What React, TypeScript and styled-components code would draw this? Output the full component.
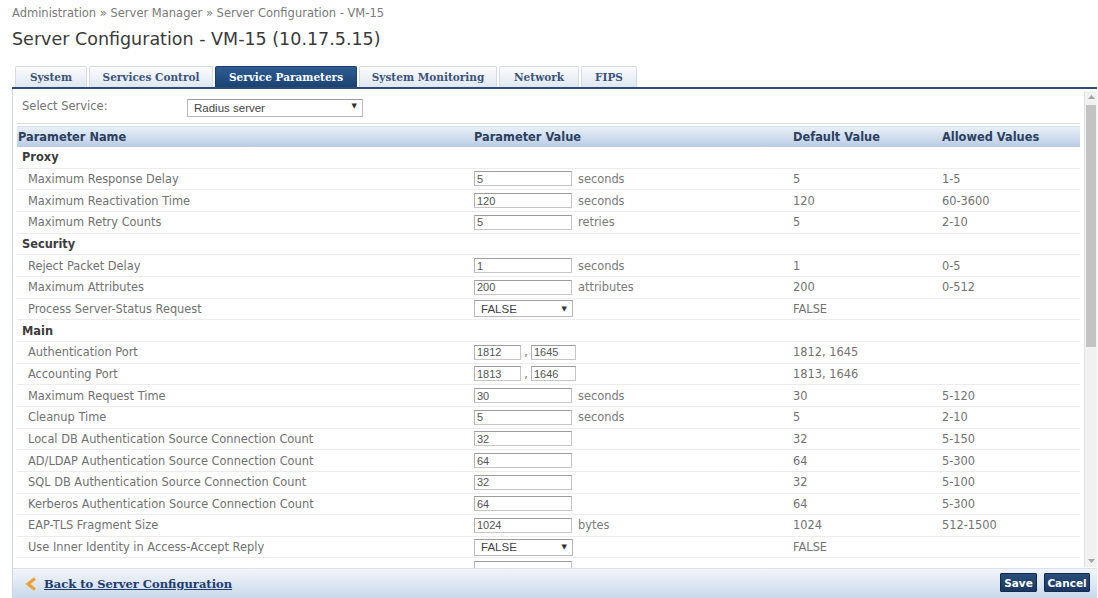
import React from "react";
import styled, { createGlobalStyle } from "styled-components";

const GlobalStyle = createGlobalStyle`
  html, body { margin: 0; padding: 0; background: #ffffff; }
  body { font-family: "DejaVu Sans", Verdana, sans-serif; color: #333; overflow: hidden; }
  * { box-sizing: border-box; }
`;

const Page = styled.div`
  width: 1098px;
  height: 598px;
  padding: 0 1px 0 12px;
  display: flex;
  flex-direction: column;
`;

const Breadcrumb = styled.div`
  margin-top: 6px;
  font-size: 11.5px;
  line-height: 15px;
  color: #7a7a7a;
`;

const Title = styled.h1`
  margin: 7px 0 0 0;
  font-size: 17.5px;
  line-height: 22px;
  font-weight: normal;
  color: #3a3a3a;
`;

const TabBar = styled.div`
  margin-top: 16px;
  display: flex;
  gap: 2px;
  padding-left: 3px;
  border-bottom: 2px solid #2c4c74;
`;

const Tab = styled.div<{ $active?: boolean; $w: number }>`
  width: ${(p) => p.$w}px;
  height: 21px;
  display: flex;
  align-items: center;
  justify-content: center;
  font-family: "DejaVu Serif", Georgia, serif;
  font-weight: bold;
  font-size: 10.5px;
  border: 1px solid ${(p) => (p.$active ? "#1b3f6b" : "#d3dbe6")};
  border-bottom: none;
  border-radius: 2px 2px 0 0;
  color: ${(p) => (p.$active ? "#ffffff" : "#3b5579")};
  background: ${(p) =>
    p.$active
      ? "linear-gradient(#2d5c92, #1b4273)"
      : "linear-gradient(#fbfcfe, #dfe7f1)"};
`;

const Panel = styled.div`
  flex: 1;
  display: flex;
  flex-direction: column;
  border-left: 1px solid #cdd5df;
  min-height: 0;
`;

const Body = styled.div`
  height: 479px;
  display: flex;
`;

const TableArea = styled.div`
  flex: 1;
  overflow: hidden;
  padding: 0 4px 0 4px;
`;

const SelectRow = styled.div`
  height: 35px;
  display: grid;
  grid-template-columns: 170px 176px;
  align-items: center;
  border-bottom: 1px solid #dcdcdc;
`;

const SelectLabel = styled.span`
  padding-left: 5px;
  font-size: 11.5px;
  color: #737373;
`;

const SelectWrap = styled.div<{ $w: number; $h: number }>`
  position: relative;
  width: ${(p) => p.$w}px;
  height: ${(p) => p.$h}px;
`;

const NativeSelect = styled.select`
  appearance: none;
  -webkit-appearance: none;
  width: 100%;
  height: 100%;
  margin: 0;
  padding: 0 0 0 6px;
  border: 1px solid #b9b9b9;
  border-top-color: #9c9c9c;
  border-radius: 0;
  background: #ffffff;
  font-family: "Liberation Sans", Arial, sans-serif;
  font-size: 11.5px;
  color: #444;
`;

const Caret = styled.span`
  position: absolute;
  right: 6px;
  top: 50%;
  transform: translateY(-50%);
  font-size: 7px;
  color: #333;
  pointer-events: none;
`;

const HeaderRow = styled.div`
  margin-top: 2px;
  height: 21px;
  display: grid;
  grid-template-columns: 457px 319px 149px 1fr;
  align-items: center;
  background: linear-gradient(#e8eff8, #b9cce5);
  border-top: 1px solid #d4dde9;
  font-weight: bold;
  font-size: 11.4px;
  color: #2c3f5e;
`;

const HeadCell = styled.span<{ $pad?: number }>`
  padding-left: ${(p) => p.$pad ?? 0}px;
`;

const Row = styled.div`
  height: 21.67px;
  display: grid;
  grid-template-columns: 457px 319px 149px 1fr;
  align-items: center;
  border-bottom: 1px solid #ececec;
  font-size: 11.4px;
  color: #717171;
`;

const SectionRow = styled.div`
  height: 21.67px;
  display: flex;
  align-items: center;
  padding-left: 5px;
  border-bottom: 1px solid #ececec;
  font-size: 11.4px;
  font-weight: bold;
  color: #3c3c3c;
`;

const NameCell = styled.span`
  padding-left: 11px;
  white-space: nowrap;
`;

const ValueCell = styled.div`
  display: flex;
  align-items: center;
`;

const TextInput = styled.input<{ $w: number }>`
  width: ${(p) => p.$w}px;
  height: 15px;
  margin: 0;
  padding: 0 2px;
  border: 1px solid #c6c6c6;
  border-top-color: #9d9d9d;
  border-left-color: #b3b3b3;
  border-radius: 0;
  font-family: "Liberation Sans", Arial, sans-serif;
  font-size: 11px;
  color: #555;
  background: #fff;
`;

const Unit = styled.span`
  margin-left: 6px;
  color: #7a7a7a;
`;

const Comma = styled.span`
  width: 10px;
  text-align: center;
  color: #777;
`;

const Plain = styled.span`
  color: #727272;
`;

const ScrollBar = styled.div`
  width: 13px;
  margin-top: 2px;
  margin-bottom: 1px;
  display: flex;
  flex-direction: column;
  background: #f1f1f1;
  border-left: 1px solid #e2e2e2;
`;

const ScrollArrow = styled.div`
  height: 12px;
  display: flex;
  align-items: center;
  justify-content: center;
`;

const Track = styled.div`
  flex: 1;
  padding: 2px 1px;
`;

const Thumb = styled.div`
  height: 242px;
  background: #c3c3c3;
`;

const Footer = styled.div`
  height: 30px;
  display: flex;
  align-items: center;
  justify-content: space-between;
  padding: 0 7px 0 12px;
  background: linear-gradient(#f2f5fa, #c9d9ec);
  border-top: 1px solid #d8e1ec;
`;

const BackLink = styled.a`
  display: flex;
  align-items: center;
  gap: 7px;
  font-family: "DejaVu Serif", Georgia, serif;
  font-weight: bold;
  font-size: 11.5px;
  color: #1f3c6e;
  text-decoration: none;
  cursor: pointer;
`;

const LinkText = styled.span`
  text-decoration: underline;
`;

const Buttons = styled.div`
  display: flex;
  gap: 7px;
  margin-bottom: 2px;
`;

const Button = styled.button<{ $w: number }>`
  width: ${(p) => p.$w}px;
  height: 19px;
  padding: 0;
  border: 1px solid #122c50;
  border-radius: 1px;
  background: linear-gradient(#2a4d7b, #1a375f);
  color: #ffffff;
  font-family: "DejaVu Sans", Verdana, sans-serif;
  font-weight: bold;
  font-size: 10.5px;
  cursor: pointer;
`;

type Value =
  | { kind: "input"; v: string; unit?: string }
  | { kind: "pair"; a: string; b: string }
  | { kind: "select"; v: string }
  | { kind: "blank" };

type Item =
  | { type: "section"; name: string }
  | { type: "param"; name: string; value: Value; def: string; allowed: string };

const items: Item[] = [
  { type: "section", name: "Proxy" },
  { type: "param", name: "Maximum Response Delay", value: { kind: "input", v: "5", unit: "seconds" }, def: "5", allowed: "1-5" },
  { type: "param", name: "Maximum Reactivation Time", value: { kind: "input", v: "120", unit: "seconds" }, def: "120", allowed: "60-3600" },
  { type: "param", name: "Maximum Retry Counts", value: { kind: "input", v: "5", unit: "retries" }, def: "5", allowed: "2-10" },
  { type: "section", name: "Security" },
  { type: "param", name: "Reject Packet Delay", value: { kind: "input", v: "1", unit: "seconds" }, def: "1", allowed: "0-5" },
  { type: "param", name: "Maximum Attributes", value: { kind: "input", v: "200", unit: "attributes" }, def: "200", allowed: "0-512" },
  { type: "param", name: "Process Server-Status Request", value: { kind: "select", v: "FALSE" }, def: "FALSE", allowed: "" },
  { type: "section", name: "Main" },
  { type: "param", name: "Authentication Port", value: { kind: "pair", a: "1812", b: "1645" }, def: "1812, 1645", allowed: "" },
  { type: "param", name: "Accounting Port", value: { kind: "pair", a: "1813", b: "1646" }, def: "1813, 1646", allowed: "" },
  { type: "param", name: "Maximum Request Time", value: { kind: "input", v: "30", unit: "seconds" }, def: "30", allowed: "5-120" },
  { type: "param", name: "Cleanup Time", value: { kind: "input", v: "5", unit: "seconds" }, def: "5", allowed: "2-10" },
  { type: "param", name: "Local DB Authentication Source Connection Count", value: { kind: "input", v: "32" }, def: "32", allowed: "5-150" },
  { type: "param", name: "AD/LDAP Authentication Source Connection Count", value: { kind: "input", v: "64" }, def: "64", allowed: "5-300" },
  { type: "param", name: "SQL DB Authentication Source Connection Count", value: { kind: "input", v: "32" }, def: "32", allowed: "5-100" },
  { type: "param", name: "Kerberos Authentication Source Connection Count", value: { kind: "input", v: "64" }, def: "64", allowed: "5-300" },
  { type: "param", name: "EAP-TLS Fragment Size", value: { kind: "input", v: "1024", unit: "bytes" }, def: "1024", allowed: "512-1500" },
  { type: "param", name: "Use Inner Identity in Access-Accept Reply", value: { kind: "select", v: "FALSE" }, def: "FALSE", allowed: "" },
  { type: "param", name: "", value: { kind: "input", v: "" }, def: "", allowed: "" },
];

function SelectBox({ value, w, h }: { value: string; w: number; h: number }) {
  return (
    <SelectWrap $w={w} $h={h}>
      <NativeSelect defaultValue={value}>
        <option value={value}>{value}</option>
      </NativeSelect>
      <Caret>▼</Caret>
    </SelectWrap>
  );
}

function ValueView({ value }: { value: Value }) {
  switch (value.kind) {
    case "input":
      return (
        <ValueCell>
          <TextInput $w={98} defaultValue={value.v} readOnly />
          {value.unit && <Unit>{value.unit}</Unit>}
        </ValueCell>
      );
    case "pair":
      return (
        <ValueCell>
          <TextInput $w={47} defaultValue={value.a} readOnly />
          <Comma>,</Comma>
          <TextInput $w={45} defaultValue={value.b} readOnly />
        </ValueCell>
      );
    case "select":
      return (
        <ValueCell>
          <SelectBox value={value.v} w={99} h={17} />
        </ValueCell>
      );
    default:
      return <ValueCell />;
  }
}

function ChevronLeft() {
  return (
    <svg width="12" height="14" viewBox="0 0 12 14">
      <polyline
        points="10,1.5 3,7 10,12.5"
        fill="none"
        stroke="#f0a032"
        strokeWidth="3.2"
        strokeLinejoin="miter"
      />
    </svg>
  );
}

function ArrowIcon({ up }: { up?: boolean }) {
  return (
    <svg width="7" height="4" viewBox="0 0 7 4">
      <polygon points={up ? "0,4 3.5,0 7,4" : "0,0 3.5,4 7,0"} fill="#a3a3a3" />
    </svg>
  );
}

export default function App() {
  const tabs: { label: string; w: number; active?: boolean }[] = [
    { label: "System", w: 72 },
    { label: "Services Control", w: 124 },
    { label: "Service Parameters", w: 142, active: true },
    { label: "System Monitoring", w: 138 },
    { label: "Network", w: 80 },
    { label: "FIPS", w: 56 },
  ];

  return (
    <>
      <GlobalStyle />
      <Page>
        <Breadcrumb>Administration » Server Manager » Server Configuration - VM-15</Breadcrumb>
        <Title>Server Configuration - VM-15 (10.17.5.15)</Title>
        <TabBar>
          {tabs.map((t) => (
            <Tab key={t.label} $w={t.w} $active={t.active}>
              {t.label}
            </Tab>
          ))}
        </TabBar>
        <Panel>
          <Body>
            <TableArea>
              <SelectRow>
                <SelectLabel>Select Service:</SelectLabel>
                <SelectBox value="Radius server" w={176} h={18} />
              </SelectRow>
              <HeaderRow>
                <HeadCell $pad={1}>Parameter Name</HeadCell>
                <HeadCell>Parameter Value</HeadCell>
                <HeadCell>Default Value</HeadCell>
                <HeadCell>Allowed Values</HeadCell>
              </HeaderRow>
              {items.map((it, i) =>
                it.type === "section" ? (
                  <SectionRow key={i}>{it.name}</SectionRow>
                ) : (
                  <Row key={i}>
                    <NameCell>{it.name}</NameCell>
                    <ValueView value={it.value} />
                    <Plain>{it.def}</Plain>
                    <Plain>{it.allowed}</Plain>
                  </Row>
                )
              )}
            </TableArea>
            <ScrollBar>
              <ScrollArrow>
                <ArrowIcon up />
              </ScrollArrow>
              <Track>
                <Thumb />
              </Track>
              <ScrollArrow>
                <ArrowIcon />
              </ScrollArrow>
            </ScrollBar>
          </Body>
          <Footer>
            <BackLink>
              <ChevronLeft />
              <LinkText>Back to Server Configuration</LinkText>
            </BackLink>
            <Buttons>
              <Button $w={37}>Save</Button>
              <Button $w={46}>Cancel</Button>
            </Buttons>
          </Footer>
        </Panel>
      </Page>
    </>
  );
}
